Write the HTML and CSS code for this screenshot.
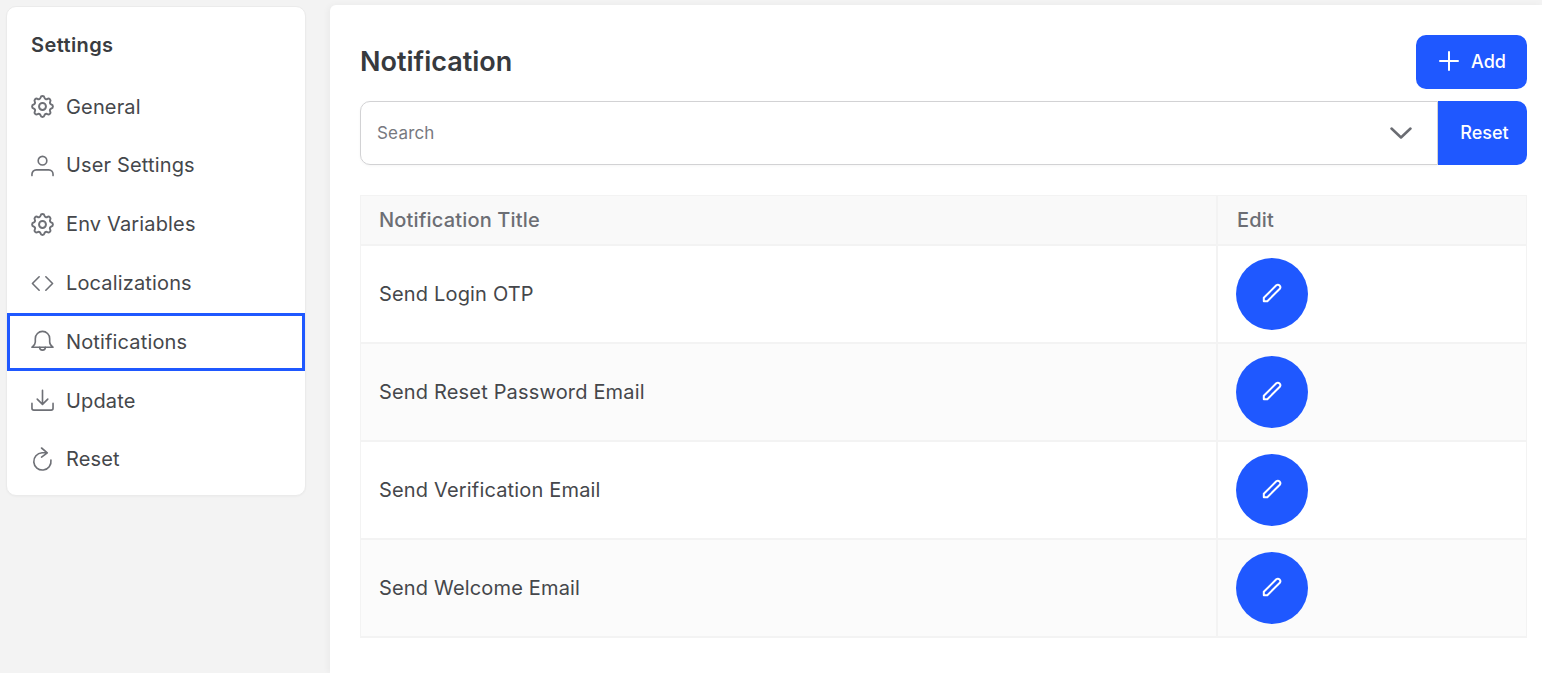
FILE: index.html
```html
<!DOCTYPE html>
<html lang="en">
<head>
<meta charset="utf-8">
<title>Notification Settings</title>
<link rel="stylesheet" href="styles.css">
</head>
<body>
<div class="layout">
  <aside class="sidebar">
    <h2 class="side-title">Settings</h2>
    <nav class="side-nav">
      <a class="side-item"><svg class="side-icon" viewBox="2 2 20 20"><path d="M10.3 4.3c.4-1.8 3-1.8 3.4 0a1.7 1.7 0 0 0 2.6 1.1c1.5-.9 3.3.8 2.4 2.4a1.7 1.7 0 0 0 1 2.5c1.8.4 1.8 3 0 3.4a1.7 1.7 0 0 0-1 2.6c.9 1.5-.9 3.3-2.4 2.4a1.7 1.7 0 0 0-2.6 1c-.4 1.8-3 1.8-3.4 0a1.7 1.7 0 0 0-2.6-1c-1.5.9-3.3-.9-2.4-2.4a1.7 1.7 0 0 0-1-2.6c-1.8-.4-1.8-3 0-3.4a1.7 1.7 0 0 0 1-2.5c-.9-1.6.9-3.3 2.4-2.4a1.7 1.7 0 0 0 2.6-1.1z"/><circle cx="12" cy="12" r="3"/></svg><span>General</span></a>
      <a class="side-item"><svg class="side-icon" viewBox="0 0 24 24"><circle cx="12" cy="7" r="4.5"/><path d="M1 22.5V21a4.5 4.5 0 0 1 4.5-4.5h13A4.5 4.5 0 0 1 23 21v1.500"/></svg><span>User Settings</span></a>
      <a class="side-item"><svg class="side-icon" viewBox="2 2 20 20"><path d="M10.3 4.3c.4-1.8 3-1.8 3.4 0a1.7 1.7 0 0 0 2.6 1.1c1.5-.9 3.3.8 2.4 2.4a1.7 1.7 0 0 0 1 2.5c1.8.4 1.8 3 0 3.4a1.7 1.7 0 0 0-1 2.6c.9 1.5-.9 3.3-2.4 2.4a1.7 1.7 0 0 0-2.6 1c-.4 1.8-3 1.8-3.4 0a1.7 1.7 0 0 0-2.6-1c-1.5.9-3.3-.9-2.4-2.4a1.7 1.7 0 0 0-1-2.6c-1.8-.4-1.8-3 0-3.4a1.7 1.7 0 0 0 1-2.5c-.9-1.6.9-3.3 2.4-2.4a1.7 1.7 0 0 0 2.6-1.1z"/><circle cx="12" cy="12" r="3"/></svg><span>Env Variables</span></a>
      <a class="side-item"><svg class="side-icon" viewBox="0 0 24 24"><path d="M8.5 5l-7 7 7 7M15.5 5l7 7-7 7"/></svg><span>Localizations</span></a>
      <a class="side-item active"><svg class="side-icon" viewBox="0 0 24 24"><path d="M12 1.500a7.500 7.500 0 0 0-7.500 7.500v3.500c0 3-1.500 4-3.500 5.500h22c-2-1.500-3.500-2.500-3.500-5.500V9A7.500 7.500 0 0 0 12 1.500z"/><path d="M9 18a3 3 0 0 0 6 0"/></svg><span>Notifications</span></a>
      <a class="side-item"><svg class="side-icon" viewBox="0 0 24 24"><path d="M1 15v5a2 2 0 0 0 2 2h18a2 2 0 0 0 2-2v-5M12 1.500V16M6.500 10.500 12 16l5.500-5.500"/></svg><span>Update</span></a>
      <a class="side-item"><svg class="side-icon" viewBox="0 0 24 24"><path d="M20.800 12.700A9 9 0 1 1 11.500 5h5M11 0l6 5-6 4.500"/></svg><span>Reset</span></a>
    </nav>
  </aside>
  <main class="panel">
    <header class="panel-head">
      <h1 class="panel-title">Notification</h1>
      <button class="btn btn-add"><svg class="plus" viewBox="0 0 20 20"><path d="M10 1v18M1 10h18"/></svg>Add</button>
    </header>
    <div class="search-row">
      <div class="search-box">
        <span class="placeholder">Search</span>
        <svg class="chevron" viewBox="0 0 22 12"><path d="M1.500 1.500 11 10.500l9.500-9"/></svg>
      </div>
      <button class="btn btn-reset">Reset</button>
    </div>
    <table class="grid">
      <thead>
        <tr><th class="col-title">Notification Title</th><th>Edit</th></tr>
      </thead>
      <tbody>
        <tr class="alt-a"><td>Send Login OTP</td><td><button class="edit"><svg viewBox="0 0 24 24"><path d="M3.800 19.200v-3.400L16.300 3.300a2.500 2.500 0 0 1 3.500 3.500L7.300 19.200z"/></svg></button></td></tr>
        <tr class="alt-b"><td>Send Reset Password Email</td><td><button class="edit"><svg viewBox="0 0 24 24"><path d="M3.800 19.200v-3.400L16.300 3.300a2.500 2.500 0 0 1 3.500 3.500L7.300 19.200z"/></svg></button></td></tr>
        <tr class="alt-a"><td>Send Verification Email</td><td><button class="edit"><svg viewBox="0 0 24 24"><path d="M3.800 19.200v-3.400L16.300 3.300a2.500 2.500 0 0 1 3.500 3.500L7.300 19.200z"/></svg></button></td></tr>
        <tr class="alt-b"><td>Send Welcome Email</td><td><button class="edit"><svg viewBox="0 0 24 24"><path d="M3.800 19.200v-3.400L16.300 3.300a2.500 2.500 0 0 1 3.500 3.500L7.300 19.200z"/></svg></button></td></tr>
      </tbody>
    </table>
  </main>
</div>
</body>
</html>
```

FILE: styles.css
```css
* { box-sizing: border-box; }
html, body { height: 100%; }
body {
  margin: 0;
  background: #f3f3f3;
  color: #3e4044;
  font-family: Inter, "Liberation Sans", sans-serif;
  overflow: hidden;
}
.layout {
  display: flex;
  align-items: flex-start;
  height: 673px;
  padding: 5px 0 0 6px;
}
.sidebar {
  width: 300px;
  height: 490px;
  margin-top: 1px;
  flex: none;
  background: #fff;
  border: 1px solid #ebebeb;
  border-radius: 10px;
  box-shadow: 0 1px 2px rgba(0, 0, 0, .03);
}
.side-title {
  margin: 0;
  padding: 26px 24px 0;
  height: 70.300px;
  font-size: 20px;
  line-height: 24px;
  font-weight: 600;
  letter-spacing: .4px;
  color: #3a3c40;
}
.side-nav { display: flex; flex-direction: column; }
.side-item {
  display: flex;
  align-items: center;
  gap: 12px;
  height: 58.800px;
  padding: 0 24px;
  font-size: 20px;
  letter-spacing: .15px;
  color: #45474b;
}
.side-item.active {
  height: 58px;
  margin-top: .4px;
  margin-bottom: .4px;
  border: 3px solid #1f58ff;
  padding: 0 21px;
}
.side-icon {
  width: 23px;
  height: 23px;
  flex: none;
  fill: none;
  overflow: visible;
  stroke: #6e7076;
  stroke-width: 1.700;
  stroke-linecap: round;
  stroke-linejoin: round;
}
.panel {
  flex: 1;
  height: 668px;
  margin-left: 24px;
  padding: 30px 15px 0 30px;
  background: #fff;
  border-radius: 6px 0 0 0;
  box-shadow: -2px 0 6px rgba(0, 0, 0, .04);
}
.panel-head {
  display: flex;
  align-items: center;
  justify-content: space-between;
  height: 54px;
  margin-bottom: 12px;
}
.panel-title {
  margin: 0;
  font-size: 27px;
  line-height: 54px;
  font-weight: 600;
  color: #373a3e;
}
.btn {
  display: inline-flex;
  align-items: center;
  justify-content: center;
  border: 0;
  background: #1f58ff;
  color: #fff;
  font-family: inherit;
  font-size: 18px;
  font-weight: 500;
  padding-top: 0;
  padding-bottom: 2px;
}
.btn-add {
  width: 111px;
  height: 54px;
  gap: 12px;
  padding-left: 2px;
  padding-right: 0;
  border-radius: 10px;
}
.plus {
  width: 20px;
  height: 20px;
  fill: none;
  stroke: #fff;
  stroke-width: 2;
  stroke-linecap: round;
}
.search-row {
  display: flex;
  height: 64px;
  margin-bottom: 30px;
}
.search-box {
  flex: 1;
  display: flex;
  align-items: center;
  justify-content: space-between;
  padding: 0 25px 0 16px;
  border: 1px solid #d2d2d4;
  border-radius: 10px 0 0 10px;
  box-shadow: 0 1px 3px rgba(0, 0, 0, .04);
}
.placeholder { font-size: 17px; letter-spacing: .2px; color: #77797f; }
.chevron {
  width: 22px;
  height: 12px;
  fill: none;
  stroke: #6a6c72;
  stroke-width: 2.500;
  stroke-linecap: round;
  stroke-linejoin: round;
}
.btn-reset {
  width: 89px;
  padding-left: 4px;
  padding-right: 0;
  border-radius: 0 10px 10px 0;
}
.grid {
  width: 100%;
  border-collapse: separate;
  border-spacing: 0;
  table-layout: fixed;
  border-top: 1px solid #f3f3f3;
  border-left: 1px solid #f3f3f3;
}
.grid th, .grid td {
  padding: 0 0 0 18px;
  border-right: 1px solid #f3f3f3;
  border-bottom: 2px solid #f3f3f3;
  text-align: left;
  font-size: 20px;
  letter-spacing: .17px;
}
.grid th {
  height: 50px;
  background: #f9f9f9;
  font-weight: 500;
  color: #6c6e74;
}
.col-title { width: 857px; border-right-width: 2px !important; }
.grid th:last-child { padding-left: 19px; }
.grid td { height: 98px; color: #45474b; }
.grid td:first-child { border-right-width: 2px; }
.alt-a { background: #fff; }
.alt-b { background: #fbfbfb; }
.edit {
  display: flex;
  align-items: center;
  justify-content: center;
  width: 72px;
  height: 72px;
  padding: 0;
  border: 0;
  border-radius: 50%;
  background: #1f58ff;
}
.edit svg {
  width: 24px;
  height: 24px;
  fill: none;
  stroke: #fff;
  stroke-width: 2;
  stroke-linejoin: round;
}
```
